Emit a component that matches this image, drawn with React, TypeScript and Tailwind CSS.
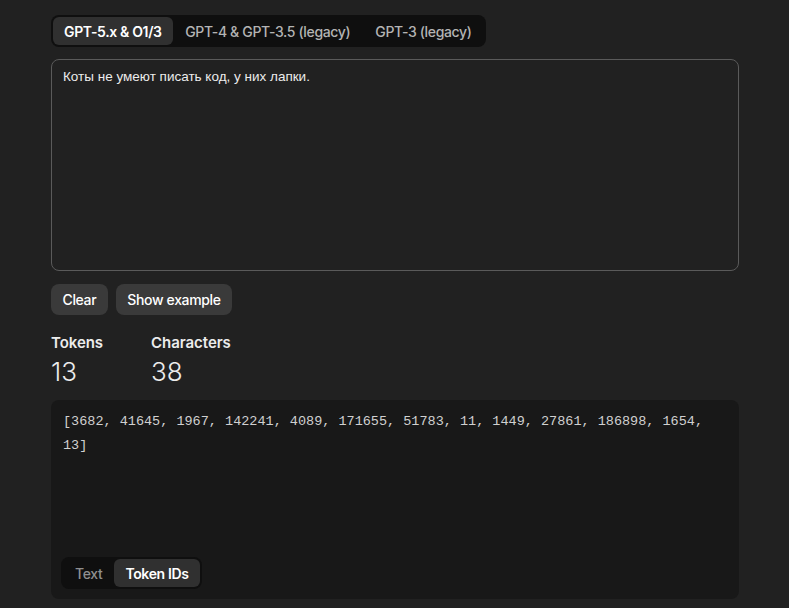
import { useState } from "react";

const models = ["GPT-5.x & O1/3", "GPT-4 & GPT-3.5 (legacy)", "GPT-3 (legacy)"];

const tokenIds = [3682, 41645, 1967, 142241, 4089, 171655, 51783, 11, 1449, 27861, 186898, 1654, 13];

export default function App() {
  const [model, setModel] = useState(0);
  const [text, setText] = useState("Коты не умеют писать код, у них лапки.");
  const [view, setView] = useState<"text" | "ids">("ids");

  return (
    <div className="min-h-screen bg-[#212121] font-['Inter',sans-serif] text-[#ececec]">
      <div className="ml-[51px] w-[688px] pt-[15px]">
        {/* Model tabs */}
        <div className="inline-flex rounded-[8px] bg-[#0f0f0f] p-[2px]">
          {models.map((m, i) => (
            <button
              key={m}
              onClick={() => setModel(i)}
              className={
                i === model
                  ? "h-[28px] rounded-[6px] bg-[#303030] px-[11px] text-[14px] font-semibold tracking-[-0.35px] text-white"
                  : "h-[28px] rounded-[6px] px-[12.5px] text-[14px] font-medium tracking-[-0.35px] text-[#b4b4b4]"
              }
            >
              {m}
            </button>
          ))}
        </div>

        {/* Input */}
        <textarea
          value={text}
          onChange={(e) => setText(e.target.value)}
          className="mt-[12px] block h-[212px] w-full resize-none rounded-[8px] border border-[#5a5a5a] bg-[#212121] px-[11px] py-[7px] font-['Liberation_Sans',sans-serif] text-[13.5px] leading-[20px] text-[#ececec] outline-none"
        />

        {/* Actions */}
        <div className="mt-[13px] flex gap-[8px]">
          <button className="h-[31px] rounded-[8px] bg-[#3a3a3a] px-[11.5px] text-[14px] font-medium tracking-[-0.35px] text-white" onClick={() => setText("")}>
            Clear
          </button>
          <button className="h-[31px] rounded-[8px] bg-[#3a3a3a] px-[11.5px] text-[14px] font-medium tracking-[-0.35px] text-white">
            Show example
          </button>
        </div>

        {/* Stats */}
        <div className="mt-[18px] flex gap-[48px]">
          <div>
            <div className="text-[15px] font-semibold leading-[20px] tracking-[-0.05px] text-[#ececec]">Tokens</div>
            <div className="mt-[3px] text-[26px] font-light leading-[32px] text-[#ececec]">13</div>
          </div>
          <div>
            <div className="text-[15px] font-semibold leading-[20px] tracking-[-0.05px] text-[#ececec]">Characters</div>
            <div className="mt-[3px] text-[26px] font-light leading-[32px] text-[#ececec]">38</div>
          </div>
        </div>

        {/* Output */}
        <div className="mt-[12px] flex h-[199px] flex-col rounded-[8px] bg-[#181818] px-[10px] pb-[10px] pt-[10px]">
          <div className="flex-1 px-[2px] font-['Liberation_Mono',monospace] text-[13.5px] leading-[24px] text-[#d0d0d0]">
            {view === "ids" ? `[${tokenIds.join(", ")}]` : text}
          </div>
          <div className="inline-flex self-start rounded-[8px] bg-[#0f0f0f] p-[2px]">
            <button
              onClick={() => setView("text")}
              className={
                view === "text"
                  ? "h-[28px] rounded-[6px] bg-[#303030] px-[12px] text-[14px] font-semibold tracking-[-0.35px] text-white"
                  : "h-[28px] rounded-[6px] px-[12px] text-[14px] font-medium tracking-[-0.35px] text-[#8f8f8f]"
              }
            >
              Text
            </button>
            <button
              onClick={() => setView("ids")}
              className={
                view === "ids"
                  ? "h-[28px] rounded-[6px] bg-[#303030] px-[11px] text-[14px] font-semibold tracking-[-0.35px] text-white"
                  : "h-[28px] rounded-[6px] px-[11px] text-[14px] font-medium tracking-[-0.35px] text-[#8f8f8f]"
              }
            >
              Token IDs
            </button>
          </div>
        </div>
      </div>
    </div>
  );
}
